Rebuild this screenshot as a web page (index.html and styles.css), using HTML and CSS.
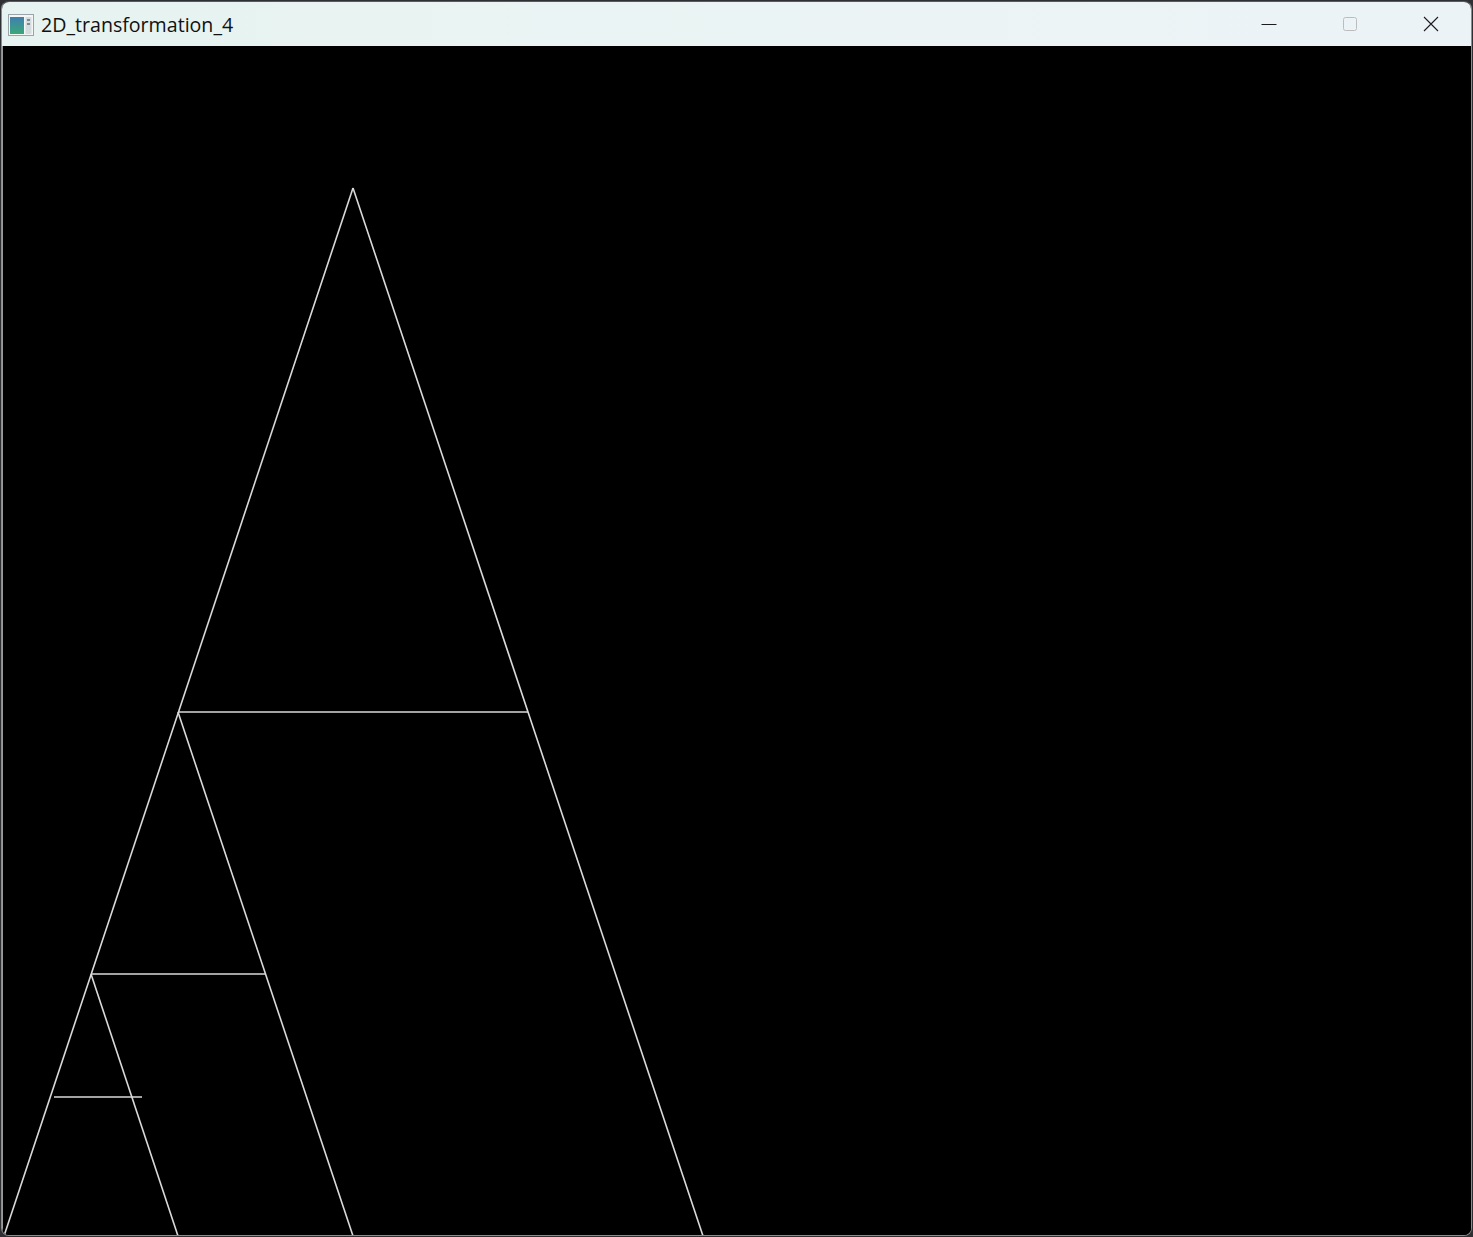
FILE: index.html
```html
<!DOCTYPE html>
<html>
<head>
<meta charset="utf-8">
<title>2D_transformation_4</title>
<link rel="stylesheet" href="styles.css">
</head>
<body>
<div class="window">
  <div class="titlebar">
    <div class="app">
      <svg class="app-icon" width="26" height="22" viewBox="0 0 26 22">
        <defs>
          <linearGradient id="g1" x1="0" y1="0" x2="0" y2="1">
            <stop offset="0" stop-color="#3f7fb0"/>
            <stop offset="1" stop-color="#3aa878"/>
          </linearGradient>
        </defs>
        <rect x="0.5" y="0.5" width="25" height="21" fill="#f4f6f6" stroke="#9aa4aa"/>
        <rect x="2" y="3" width="14" height="17" fill="url(#g1)"/>
        <rect x="17.5" y="3" width="6" height="17" fill="#d5dcdf"/>
        <rect x="19" y="5" width="3" height="2" fill="#7b8a93"/>
        <rect x="19" y="9" width="3" height="2" fill="#7b8a93"/>
      </svg>
      <span class="title">2D_transformation_4</span>
    </div>
    <div class="controls">
      <div class="ctl">
        <svg width="16" height="16" viewBox="0 0 16 16"><path d="M0.5 8.5 H15.5" stroke="#1c1c1c" stroke-width="1"/></svg>
      </div>
      <div class="ctl">
        <svg width="16" height="16" viewBox="0 0 16 16"><rect x="1.5" y="1.5" width="13" height="13" rx="2" fill="none" stroke="#bcbcbc" stroke-width="1"/></svg>
      </div>
      <div class="ctl">
        <svg width="16" height="16" viewBox="0 0 16 16"><path d="M1 1 L15 15 M15 1 L1 15" stroke="#1c1c1c" stroke-width="1.1"/></svg>
      </div>
    </div>
  </div>
  <div class="canvas">
    <svg class="drawing" width="1468" height="1189" viewBox="0 0 1468 1189">
      <g transform="translate(-3,-46)" stroke="#dadada" stroke-width="1.6" fill="none">
        <line x1="353" y1="188" x2="4" y2="1236"/>
        <line x1="353" y1="188" x2="703" y2="1236"/>
        <line x1="178" y1="712" x2="528" y2="712"/>
        <line x1="178" y1="712" x2="353" y2="1236"/>
        <line x1="91" y1="974" x2="266" y2="974"/>
        <line x1="91" y1="974" x2="178" y2="1236"/>
        <line x1="54" y1="1097" x2="142" y2="1097"/>
      </g>
    </svg>
  </div>
</div>
</body>
</html>
```

FILE: styles.css
```css
html, body {
  margin: 0;
  padding: 0;
}
body {
  background: #2e3033;
  width: 1473px;
  height: 1237px;
  overflow: hidden;
}
.window {
  box-sizing: border-box;
  width: 1471px;
  height: 1235px;
  margin: 1px 0 0 1px;
  border: 1px solid #8c8c8c;
  border-top-color: #5a5a5a;
  border-radius: 8px;
  overflow: hidden;
  display: flex;
  flex-direction: column;
  background: #000;
}
.titlebar {
  height: 44px;
  flex: 0 0 44px;
  display: flex;
  align-items: center;
  justify-content: space-between;
  background: linear-gradient(90deg, #e6f3f0 0%, #ebf4f4 50%, #ecf3f7 100%);
}
.app {
  display: flex;
  align-items: center;
  padding-left: 6px;
}
.app-icon {
  display: block;
  margin-top: 1px;
}
.title {
  font-family: "Open Sans", "Noto Sans", sans-serif;
  font-size: 19.6px;
  color: #111;
  margin-left: 7px;
  letter-spacing: 0;
}
.controls {
  display: flex;
  height: 100%;
}
.ctl {
  width: 81px;
  height: 100%;
  display: flex;
  align-items: center;
  justify-content: center;
}
.ctl svg {
  display: block;
}
.canvas {
  flex: 1;
  background: #000;
  border-left: 1px solid #9a9a9a;
  overflow: hidden;
}
.drawing {
  display: block;
}
```
